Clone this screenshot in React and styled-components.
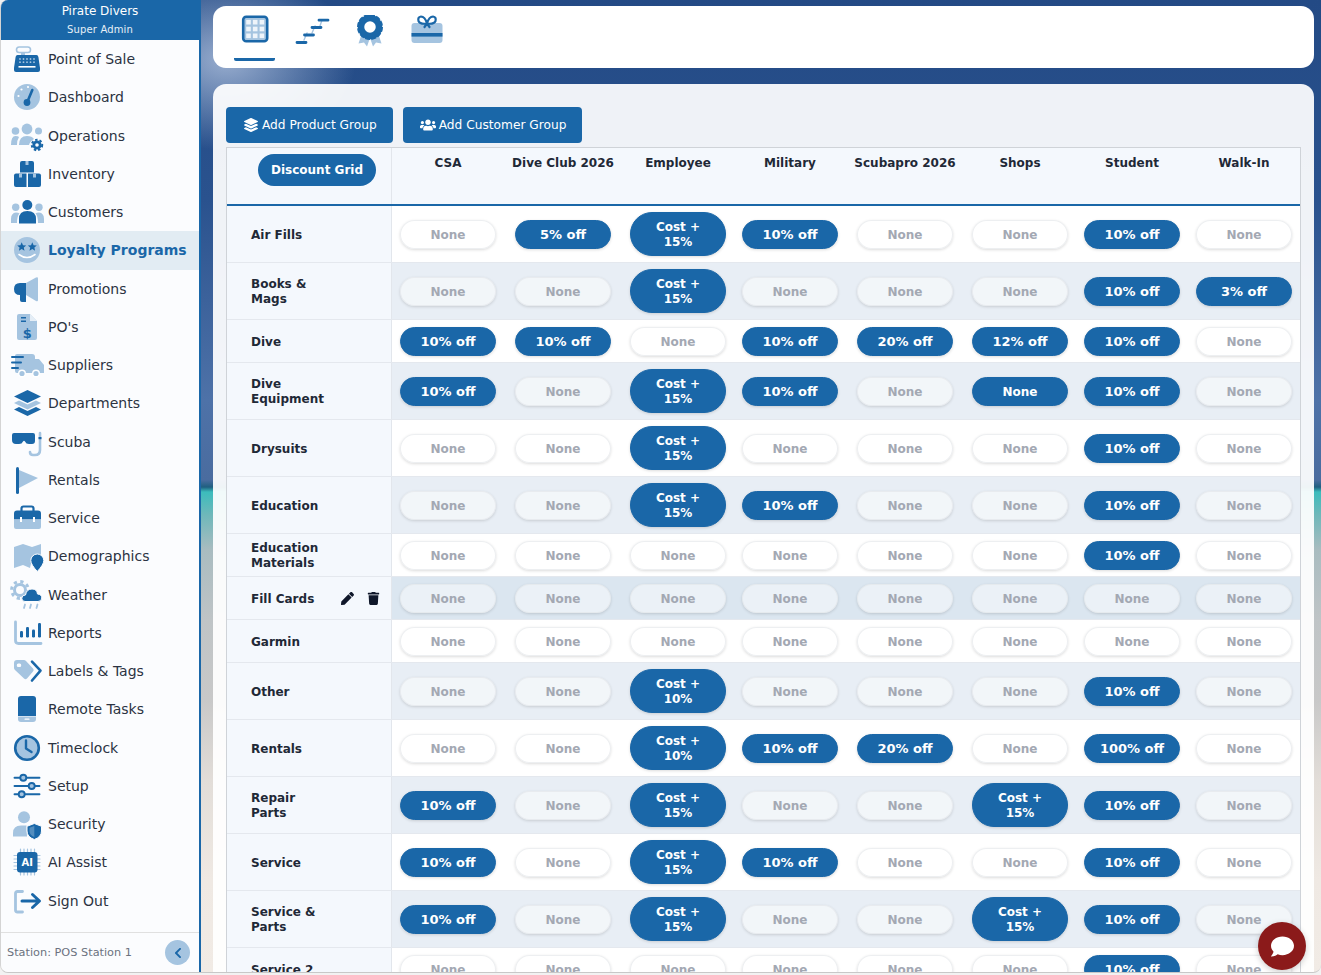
import React from "react";
import styled, { createGlobalStyle } from "styled-components";
import { FaLayerGroup, FaUsers, FaPen, FaTrash, FaComment, FaChevronLeft } from "react-icons/fa";

const DARK = "#1a67a8";
const LIGHT = "#a5c4e0";

const GlobalStyle = createGlobalStyle`
  html, body {
    margin: 0;
    padding: 0;
    height: 100%;
    background: #f2f2f2;
  }
  body {
    font-family: "DejaVu Sans", Verdana, sans-serif;
    overflow: hidden;
  }
  * { box-sizing: border-box; }
`;

const Shell = styled.div`
  position: relative;
  display: flex;
  width: 1321px;
  height: 973px;
  overflow: hidden;
  border-left: 1px solid #d4d4d4;
  border-bottom: 1px solid #c8c8c8;
  border-radius: 8px 0 8px 8px;
  background:
    radial-gradient(ellipse 130px 90px at 225px 60px, rgba(190, 205, 230, 0.75), rgba(190, 205, 230, 0) 100%),
    linear-gradient(
      180deg,
      #234a85 0,
      #2a528e 200px,
      #4e72a8 400px,
      #4a6c9f 480px,
      #1f5f80 487px,
      #3cbcbc 492px,
      #6fb8ba 515px,
      #a9bcc0 550px,
      #bfc4c6 620px,
      #c8c8c8 700px,
      #e2ddd8 780px,
      #efe9e3 880px,
      #f1ebe5 973px
    );
`;

/* sidebar */
const Sidebar = styled.aside`
  display: flex;
  flex-direction: column;
  flex: 0 0 200px;
  background: #fbfcfe;
  border-right: 2px solid ${DARK};
`;

const Brand = styled.header`
  height: 40px;
  background: ${DARK};
  color: #fff;
  text-align: center;
  padding-top: 4px;
`;

const BrandName = styled.div`
  font-size: 12px;
  line-height: 15px;
`;

const BrandRole = styled.div`
  font-size: 10px;
  line-height: 13px;
  margin-top: 4px;
  letter-spacing: 0.15px;
  color: #e6eff7;
`;

const NavList = styled.nav`
  flex: 1;
`;

const NavRow = styled.div`
  display: flex;
  align-items: center;
  gap: 3px;
  height: 38.25px;
  padding-left: 8px;
  font-size: 14px;
  color: ${(p) => (p.$active ? DARK : "#2b3342")};
  font-weight: ${(p) => (p.$active ? 700 : 400)};
  background: ${(p) => (p.$active ? "#e2ecf3" : "transparent")};
`;

const Glyph = styled.svg`
  flex: none;
  .d { fill: ${DARK}; }
  .l { fill: ${LIGHT}; }
  .w { fill: #fff; }
  .ds { fill: none; stroke: ${DARK}; stroke-linecap: round; stroke-linejoin: round; }
  .ls { fill: none; stroke: ${LIGHT}; stroke-linecap: round; stroke-linejoin: round; }
`;

const SideFoot = styled.footer`
  display: flex;
  align-items: center;
  justify-content: space-between;
  height: 40px;
  padding: 0 9px 0 6px;
  border-top: 1px solid #e0e0e0;
  font-size: 11.3px;
  color: #6b7280;
`;

const Collapse = styled.button`
  display: flex;
  align-items: center;
  justify-content: center;
  width: 25px;
  height: 25px;
  padding: 0;
  border: 0;
  border-radius: 50%;
  background: ${LIGHT};
  color: ${DARK};
  font-size: 12px;
`;

/* main area */
const Main = styled.main`
  display: flex;
  flex-direction: column;
  flex: 1;
  min-width: 0;
  gap: 16px;
  padding: 6px 7px 0 12px;
`;

const Toolbar = styled.div`
  display: flex;
  gap: 16.5px;
  flex: 0 0 62px;
  padding-left: 21px;
  background: #fff;
  border-radius: 13px;
`;

const Tab = styled.div`
  display: flex;
  justify-content: center;
  width: 41px;
  height: 55px;
  padding-top: 9px;
  border-bottom: ${(p) => (p.$active ? `3px solid ${DARK}` : "0")};
  border-radius: 2px;
`;

const Panel = styled.section`
  flex: 1;
  min-height: 0;
  padding: 23px 13px 0;
  overflow: hidden;
  background: rgba(255, 255, 255, 0.93);
  border-radius: 13px 13px 0 0;
`;

const Actions = styled.div`
  display: flex;
  gap: 10px;
  margin-bottom: 4px;
`;

const ActionButton = styled.button`
  display: flex;
  align-items: center;
  gap: 4px;
  height: 36px;
  padding: 0 16px 0 18px;
  border: 0;
  border-radius: 4px;
  background: ${DARK};
  color: #fff;
  font: 400 12.2px "DejaVu Sans", sans-serif;
`;

const GroupIcon = styled(FaUsers)`
  margin: 0 -1px 0 -1px;
`;

const Grid = styled.div`
  border: 1px solid #cfd3d8;
  border-bottom: 0;
`;

const columns = "165px 112px 118px 112px 112px 118px 112px 112px 112px";

const HeadRow = styled.div`
  display: grid;
  grid-template-columns: ${columns};
  height: 58px;
  background: #f4f8fd;
  border-bottom: 2px solid ${DARK};
`;

const HeadName = styled.div`
  padding-top: 7px;
  text-align: center;
  font-size: 12px;
  font-weight: 700;
  line-height: 16px;
  color: #1f2937;
`;

const HeadFirst = styled.div`
  padding: 6px 0 0 31px;
  border-right: 1px solid #e2e6ec;
`;

const GridBadge = styled.div`
  display: flex;
  align-items: center;
  justify-content: center;
  width: 118px;
  height: 32px;
  border-radius: 16px;
  background: ${DARK};
  color: #fff;
  font-size: 12px;
  font-weight: 700;
`;

const Row = styled.div`
  display: grid;
  grid-template-columns: ${columns};
  height: ${(p) => (p.$tall ? 57 : 43)}px;
  border-bottom: 1px solid #e4e8ee;
  background: ${(p) => (p.$hover ? "#dbe6f0" : p.$shade ? "#e8eef5" : "#fff")};
`;

const RowLabel = styled.div`
  display: flex;
  align-items: center;
  padding: 2px 0 0 24px;
  background: #f4f8fd;
  border-right: 1px solid #e2e6ec;
  font-size: 12px;
  font-weight: 700;
  line-height: 15px;
  color: #1f2937;
`;

const LabelText = styled.span`
  width: 78px;
`;

const RowTools = styled.span`
  display: flex;
  gap: 13px;
  margin: -2px 0 0 12px;
  font-size: 13px;
  color: #0f172a;
`;

const Cell = styled.div`
  display: flex;
  align-items: center;
  justify-content: center;
`;

const Pill = styled.div`
  display: flex;
  align-items: center;
  justify-content: center;
  width: 96px;
  min-height: 29px;
  padding: ${(p) => (p.$tall ? "7px 10px 5px" : p.$percent ? "0 4px" : "2px 4px 0")};
  border-radius: 22px;
  text-align: center;
  font-size: ${(p) => (p.$percent ? 13 : 12)}px;
  font-weight: 700;
  line-height: 15px;
  color: ${(p) => (p.$on ? "#fff" : "#a3a8b3")};
  background: ${(p) => (p.$on ? DARK : "rgba(255, 255, 255, 0.45)")};
  border: 1px solid ${(p) => (p.$on ? DARK : "rgba(225, 228, 232, 0.6)")};
  box-shadow: 0 1px 3px rgba(0, 0, 0, 0.14);
`;

const ChatBubble = styled.button`
  position: absolute;
  right: 15px;
  bottom: 2px;
  display: flex;
  align-items: center;
  justify-content: center;
  width: 48px;
  height: 48px;
  padding: 0;
  border: 0;
  border-radius: 50%;
  background: #8b1a1a;
  color: #fff;
  font-size: 23px;
  box-shadow: 0 2px 6px rgba(0, 0, 0, 0.2);
`;

/* icons, all drawn on a 36px box */
const Duo = ({ children, w = 36, h = 36 }) => (
  <Glyph width={w} height={h} viewBox={`0 0 ${w} ${h}`}>
    {children}
  </Glyph>
);

const Gear = ({ x, y }) => (
  <g>
    <circle className="ds" cx={x} cy={y} r="3.2" strokeWidth="2.8" />
    <circle cx={x} cy={y} r="5.2" fill="none" stroke={DARK} strokeWidth="2" strokeDasharray="2.4 2" />
  </g>
);

const icons = {
  pos: (
    <Duo>
      <rect className="ls" x="7.5" y="6" width="14" height="5.5" rx="2.7" strokeWidth="1.6" />
      <rect className="l" x="12" y="11" width="4" height="4" />
      <path className="d" d="M8.5 14H27.5Q29 14 29.4 16L31 27V29Q31 31 29 31H7Q5 31 5 29V27L6.6 16Q7 14 8.5 14Z" />
      {[10, 13.5, 17, 20.5, 24].map((x) => (
        <g key={x}>
          <circle className="l" cx={x + 1} cy="18" r="0.9" />
          <circle className="l" cx={x + 1} cy="21.2" r="0.9" />
        </g>
      ))}
      <rect className="w" x="9.5" y="25" width="17" height="1.6" />
    </Duo>
  ),
  dash: (
    <Duo>
      <circle className="l" cx="18" cy="18" r="13" />
      <circle className="w" cx="9.5" cy="17" r="1.1" />
      <circle className="w" cx="12.5" cy="10.5" r="1.1" />
      <circle className="w" cx="19" cy="8" r="1.1" />
      <circle className="d" cx="18" cy="23.5" r="3.4" />
      <path className="ds" d="M18.3 23L23.3 11" strokeWidth="2.6" />
    </Duo>
  ),
  ops: (
    <Duo>
      <circle className="l" cx="6.5" cy="13" r="3.8" />
      <circle className="l" cx="18" cy="11" r="5.4" />
      <circle className="l" cx="29.5" cy="13" r="3.5" />
      <path className="l" d="M2 27Q2 18 6.5 18Q9 18 10 19Q8 22 8 27Z" />
      <path className="l" d="M10 27Q10 18 18 18Q23 18 25 21Q21 23 20 27Z" />
      <Gear x={28} y={27} />
    </Duo>
  ),
  inv: (
    <Duo>
      <path className="d" d="M11 7Q11 5 13 5H23Q25 5 25 7V16.5H11Z" />
      <path className="d" d="M5 19.5Q5 17.5 7 17.5H17.5V31H7Q5 31 5 29Z" />
      <path className="d" d="M19 17.5H30Q32 17.5 32 19.5V29Q32 31 30 31H19Z" />
      <rect className="l" x="16.5" y="5" width="3" height="4" />
      <rect className="l" x="10" y="17.5" width="3" height="4" />
      <rect className="l" x="24" y="17.5" width="3" height="4" />
    </Duo>
  ),
  cust: (
    <Duo>
      <circle className="l" cx="6.7" cy="13.3" r="3.7" />
      <circle className="l" cx="30" cy="13.3" r="3.7" />
      <path className="l" d="M2 29V25Q2 19 7 18.5Q9.5 18.5 10.5 19.5Q8 22 8 29Z" />
      <path className="l" d="M35 29V25Q35 19 30 18.5Q27.5 18.5 26.5 19.5Q29 22 29 29Z" />
      <circle className="d" cx="18.3" cy="11" r="5" />
      <path className="d" d="M10 29.5V25Q10 17 18.3 17Q27 17 27 25V29.5Z" />
    </Duo>
  ),
  loyal: (
    <Duo>
      <circle className="l" cx="18" cy="18" r="13" />
      <path className="d" d="M12.7 10.3L14 13.2L17.2 13.5L14.8 15.6L15.5 18.8L12.7 17.1L9.9 18.8L10.6 15.6L8.2 13.5L11.4 13.2Z" />
      <path className="d" d="M23.3 10.3L24.6 13.2L27.8 13.5L25.4 15.6L26.1 18.8L23.3 17.1L20.5 18.8L21.2 15.6L18.8 13.5L22 13.2Z" />
      <path d="M10 22.5Q18 28.5 26 22.5" fill="none" stroke="#fff" strokeWidth="1.6" strokeLinecap="round" />
    </Duo>
  ),
  promo: (
    <Duo>
      <path className="l" d="M17 12L27 6.5Q29 5.5 29 7.5V29Q29 31 27 30L17 24Z" />
      <path className="d" d="M11 12H17V24H17V31H13Q11 31 11 29V24Q5 24 5 18Q5 12 11 12Z" />
    </Duo>
  ),
  po: (
    <Duo>
      <path className="l" d="M10 5H21L28 12V29Q28 31 26 31H10Q8 31 8 29V7Q8 5 10 5Z" />
      <path className="w" d="M21 5L28 12H21Z" opacity="0.7" />
      <rect className="d" x="12" y="8" width="5" height="1.5" />
      <rect className="d" x="12" y="11.5" width="5" height="1.5" />
      <text x="18.3" y="29" textAnchor="middle" fontSize="13" fontWeight="700" fill={DARK} fontFamily="DejaVu Sans">$</text>
    </Duo>
  ),
  truck: (
    <Duo>
      <path className="l" d="M8 7H23Q26 7 26 10V26H8Q6 26 6 24V9Q6 7 8 7Z" />
      <path className="l" d="M26 12H30L35 18V26H26Z" />
      <rect className="d" x="2" y="9" width="13" height="2" rx="1" />
      <rect className="d" x="2" y="14.5" width="11" height="2" rx="1" />
      <rect className="d" x="2" y="20" width="8" height="2" rx="1" />
      <circle className="l" cx="13" cy="26.5" r="3.3" stroke="#fff" strokeWidth="1.4" />
      <circle className="l" cx="27" cy="26.5" r="3.3" stroke="#fff" strokeWidth="1.4" />
    </Duo>
  ),
  layers: (
    <Duo>
      <path className="d" d="M5 24.5L10 22L18.5 26L27 22L32 24.5L18.5 31Z" />
      <path className="l" d="M5 18L10 15.5L18.5 19.5L27 15.5L32 18L18.5 24.5Z" />
      <path className="d" d="M18.5 5L32 11.5L18.5 18L5 11.5Z" />
    </Duo>
  ),
  scuba: (
    <Duo>
      <path className="d" d="M5 9H24Q26 9 26 11V17Q26 20 23 20H20Q17 20 16 17.5Q15 16 14 17.5Q13 20 10 20H7Q3 20 3 16V11Q3 9 5 9Z" />
      <path className="ls" d="M31 9V26Q31 31 26 31H24Q21 31 21 28" strokeWidth="2.6" />
      <rect className="d" x="29.5" y="13" width="3" height="2.2" />
    </Duo>
  ),
  flag: (
    <Duo>
      <path className="l" d="M10 8L29 16L10 26Z" />
      <rect className="d" x="7" y="5" width="3" height="27" rx="1.5" />
    </Duo>
  ),
  brief: (
    <Duo>
      <path className="ds" d="M12.5 11V8.5Q12.5 6.5 14.5 6.5H22.5Q24.5 6.5 24.5 8.5V11" strokeWidth="2.2" />
      <path className="d" d="M8 10.5H29Q32 10.5 32 13.5V19.5H5V13.5Q5 10.5 8 10.5Z" />
      <path className="l" d="M5 19.5H32V27Q32 29 30 29H7Q5 29 5 27Z" />
      <rect className="w" x="11" y="17" width="2" height="5" />
      <rect className="w" x="24" y="17" width="2" height="5" />
    </Duo>
  ),
  map: (
    <Duo>
      <path className="l" d="M5 9L14 6L23 9L32 6V17H24L21 30L14 27L5 30Z" />
      <path className="d" stroke="#fbfcfe" strokeWidth="1" d="M28.3 33.5Q21.8 26.5 21.8 22.5A6.5 6.5 0 0 1 34.8 22.5Q34.8 26.5 28.3 33.5Z" />
    </Duo>
  ),
  weather: (
    <Duo>
      <circle cx="11" cy="13" r="5.5" fill="none" stroke={LIGHT} strokeWidth="3" />
      <circle cx="11" cy="13" r="8.4" fill="none" stroke={LIGHT} strokeWidth="3" strokeDasharray="3.2 3.4" />
      <path className="d" stroke="#fbfcfe" strokeWidth="1" d="M16 24.5Q12.8 24.5 12.8 21.3Q12.8 18 16.5 18Q17.5 12 23 12Q28 12 28.5 17Q32.8 17.5 32.8 21Q32.8 24.5 29 24.5Z" />
      <path className="ls" d="M16 27.5L15 31M22 27.5L21 31M28.5 27.5L27.5 31" strokeWidth="1.8" />
    </Duo>
  ),
  chart: (
    <Duo>
      <path className="ls" d="M6.5 7V25.5Q6.5 28.5 9.5 28.5H32" strokeWidth="2.8" />
      <rect className="d" x="11" y="16" width="3" height="6.5" rx="1.2" />
      <rect className="d" x="17" y="12" width="3" height="10.5" rx="1.2" />
      <rect className="d" x="23" y="14.5" width="3" height="8" rx="1.2" />
      <rect className="d" x="29" y="8" width="3" height="14.5" rx="1.2" />
    </Duo>
  ),
  tags: (
    <Duo>
      <path className="l" d="M5 10Q5 7 8 7H15Q16 7 17 8L24 15.5Q25.5 17 24 18.5L18 25.5Q16.5 27 15 25.5L6 17Q5 16 5 15ZM10 10.5A1.8 1.8 0 1 0 10 14A1.8 1.8 0 1 0 10 10.5Z" />
      <path className="ds" d="M23 8.7L31.5 17.7L23 27.5" strokeWidth="2.6" />
    </Duo>
  ),
  phone: (
    <Duo>
      <path className="d" d="M12 5H24Q27 5 27 8V25H9V8Q9 5 12 5Z" />
      <path className="l" d="M9 25.5H27V28Q27 31 24 31H12Q9 31 9 28Z" />
      <rect className="w" x="15.5" y="27.5" width="5" height="1.3" rx="0.6" />
    </Duo>
  ),
  clock: (
    <Duo>
      <circle cx="18" cy="18" r="11.8" fill={LIGHT} stroke={DARK} strokeWidth="2.6" />
      <path className="ds" d="M17 10.5V18.5L22.5 22" strokeWidth="2.4" />
    </Duo>
  ),
  setup: (
    <Duo>
      <path className="ds" d="M5.5 9.7H30.5M5.5 18H30.5M5.5 26.3H30.5" strokeWidth="1.9" />
      <circle cx="14.3" cy="9.7" r="3" fill={LIGHT} stroke={DARK} strokeWidth="1.9" />
      <circle cx="22.7" cy="18" r="3" fill={LIGHT} stroke={DARK} strokeWidth="1.9" />
      <circle cx="12.7" cy="26.3" r="3" fill={LIGHT} stroke={DARK} strokeWidth="1.9" />
    </Duo>
  ),
  secure: (
    <Duo>
      <circle className="l" cx="15" cy="11.3" r="6" />
      <path className="l" d="M4 30.5V27Q4 19.5 12 19.5H17.5L18 30.5Z" />
      <path className="d" stroke="#fbfcfe" strokeWidth="1" d="M25.3 17.5L32.5 20.3V25Q32.5 31 25.3 33.5Q18 31 18 25V20.3Z" />
      <path className="w" d="M25.3 20V31Q20.5 29 20.5 25V21.8Z" opacity="0.25" />
    </Duo>
  ),
  ai: (
    <Duo>
      <path className="ls" d="M5 11.5H31M5 15H31M5 18.5H31M5 22H31M5 25.5H31M11.5 5V31M15 5V31M18.5 5V31M22 5V31M25.5 5V31" strokeWidth="1.2" />
      <rect className="d" x="8" y="8" width="20.5" height="20.5" rx="3" />
      <text x="18.2" y="22" textAnchor="middle" fontSize="10" fontWeight="700" fill="#fff" fontFamily="DejaVu Sans">AI</text>
    </Duo>
  ),
  out: (
    <Duo>
      <path className="ls" d="M13.5 8.5H8.5Q6.5 8.5 6.5 10.5V27Q6.5 29 8.5 29H13.5" strokeWidth="2.8" />
      <path className="ds" d="M13 18H30M23.5 11.5L30.5 18L23.5 24.5" strokeWidth="3" />
    </Duo>
  ),
};

const TabGrid = () => (
  <Duo w={28} h={36}>
    <rect x="2.2" y="1.8" width="24" height="24.5" rx="3" fill={LIGHT} stroke={DARK} strokeWidth="2.6" />
    {[5.2, 11.9, 18.6].map((x) =>
      [4.9, 11.7, 18.5].map((y) => <rect key={`${x}-${y}`} x={x} y={y} width="4.6" height="4.6" fill="#eef4fa" />)
    )}
  </Duo>
);

const TabSteps = () => (
  <Duo w={36} h={36}>
    <path className="ls" d="M10 25L13 18M18 18L21 11M26 11L28 5" strokeWidth="1.4" />
    <path className="ds" d="M3 27.5H12M10.5 20H19.5M18 12.5H27M25 5.2H34" strokeWidth="2.8" />
  </Duo>
);

const TabAward = () => (
  <Duo w={30} h={36}>
    <path className="l" d="M7 18L3.5 28.5L9 27.5L12 31.5L15 23L18 31.5L21 27.5L26.5 28.5L23 18Z" />
    <circle cx="15" cy="12" r="9" fill="#fff" stroke={DARK} strokeWidth="6.5" />
    <circle cx="15" cy="12" r="12.3" fill="none" stroke={DARK} strokeWidth="1.4" strokeDasharray="5 1.4" />
  </Duo>
);

const TabGift = () => (
  <Duo w={32} h={36}>
    <rect className="l" x="0.5" y="8" width="31" height="20" rx="3" />
    <rect className="d" x="0.5" y="18" width="31" height="3.6" />
    <path className="ds" d="M16 8.5Q9 9.5 7.5 6Q6.5 2 10 1.5Q14 1.5 16 8.5Q18 1.5 22 1.5Q25.5 2 24.5 6Q23 9.5 16 8.5M13.5 12L16 8.5L18.5 12" strokeWidth="2.2" />
  </Duo>
);

const navItems = [
  ["Point of Sale", "pos"],
  ["Dashboard", "dash"],
  ["Operations", "ops"],
  ["Inventory", "inv"],
  ["Customers", "cust"],
  ["Loyalty Programs", "loyal", true],
  ["Promotions", "promo"],
  ["PO's", "po"],
  ["Suppliers", "truck"],
  ["Departments", "layers"],
  ["Scuba", "scuba"],
  ["Rentals", "flag"],
  ["Service", "brief"],
  ["Demographics", "map"],
  ["Weather", "weather"],
  ["Reports", "chart"],
  ["Labels & Tags", "tags"],
  ["Remote Tasks", "phone"],
  ["Timeclock", "clock"],
  ["Setup", "setup"],
  ["Security", "secure"],
  ["AI Assist", "ai"],
  ["Sign Out", "out"],
];

const groups = ["CSA", "Dive Club 2026", "Employee", "Military", "Scubapro 2026", "Shops", "Student", "Walk-In"];

const N = "None";
const C15 = "Cost + 15%";
const C10 = "Cost + 10%";
const T = "10% off";

const rows = [
  { name: "Air Fills", tall: true, vals: [N, "5% off", C15, T, N, N, T, N] },
  { name: "Books & Mags", tall: true, shade: true, vals: [N, N, C15, N, N, N, T, "3% off"] },
  { name: "Dive", vals: [T, T, N, T, "20% off", "12% off", T, N] },
  { name: "Dive Equipment", tall: true, shade: true, vals: [T, N, C15, T, N, "!None", T, N] },
  { name: "Drysuits", tall: true, vals: [N, N, C15, N, N, N, T, N] },
  { name: "Education", tall: true, shade: true, vals: [N, N, C15, T, N, N, T, N] },
  { name: "Education Materials", vals: [N, N, N, N, N, N, T, N] },
  { name: "Fill Cards", hover: true, vals: [N, N, N, N, N, N, N, N] },
  { name: "Garmin", vals: [N, N, N, N, N, N, N, N] },
  { name: "Other", tall: true, shade: true, vals: [N, N, C10, N, N, N, T, N] },
  { name: "Rentals", tall: true, vals: [N, N, C10, T, "20% off", N, "100% off", N] },
  { name: "Repair Parts", tall: true, shade: true, vals: [T, N, C15, N, N, C15, T, N] },
  { name: "Service", tall: true, vals: [T, N, C15, T, N, N, T, N] },
  { name: "Service & Parts", tall: true, shade: true, vals: [T, N, C15, N, N, C15, T, N] },
  { name: "Service 2", vals: [N, N, N, N, N, N, T, N] },
];

export default function App() {
  return (
    <Shell>
      <GlobalStyle />
      <Sidebar>
        <Brand>
          <BrandName>Pirate Divers</BrandName>
          <BrandRole>Super Admin</BrandRole>
        </Brand>
        <NavList>
          {navItems.map(([label, icon, active]) => (
            <NavRow key={label} $active={active}>
              {icons[icon]}
              <span>{label}</span>
            </NavRow>
          ))}
        </NavList>
        <SideFoot>
          <span>Station: POS Station 1</span>
          <Collapse>
            <FaChevronLeft />
          </Collapse>
        </SideFoot>
      </Sidebar>
      <Main>
        <Toolbar>
          <Tab $active>
            <TabGrid />
          </Tab>
          <Tab>
            <TabSteps />
          </Tab>
          <Tab>
            <TabAward />
          </Tab>
          <Tab>
            <TabGift />
          </Tab>
        </Toolbar>
        <Panel>
          <Actions>
            <ActionButton>
              <FaLayerGroup size={14} />
              Add Product Group
            </ActionButton>
            <ActionButton>
              <GroupIcon size={16} />
              Add Customer Group
            </ActionButton>
          </Actions>
          <Grid>
            <HeadRow>
              <HeadFirst>
                <GridBadge>Discount Grid</GridBadge>
              </HeadFirst>
              {groups.map((g) => (
                <HeadName key={g}>{g}</HeadName>
              ))}
            </HeadRow>
            {rows.map((row) => (
              <Row key={row.name} $tall={row.tall} $shade={row.shade} $hover={row.hover}>
                <RowLabel>
                  <LabelText>{row.name}</LabelText>
                  {row.hover && (
                    <RowTools>
                      <FaPen />
                      <FaTrash />
                    </RowTools>
                  )}
                </RowLabel>
                {row.vals.map((v, i) => {
                  const on = v !== N;
                  return (
                    <Cell key={i}>
                      <Pill $on={on} $tall={v.startsWith("Cost")} $percent={v.endsWith("off")}>
                        {v.replace("!", "")}
                      </Pill>
                    </Cell>
                  );
                })}
              </Row>
            ))}
          </Grid>
        </Panel>
      </Main>
      <ChatBubble>
        <FaComment />
      </ChatBubble>
    </Shell>
  );
}
